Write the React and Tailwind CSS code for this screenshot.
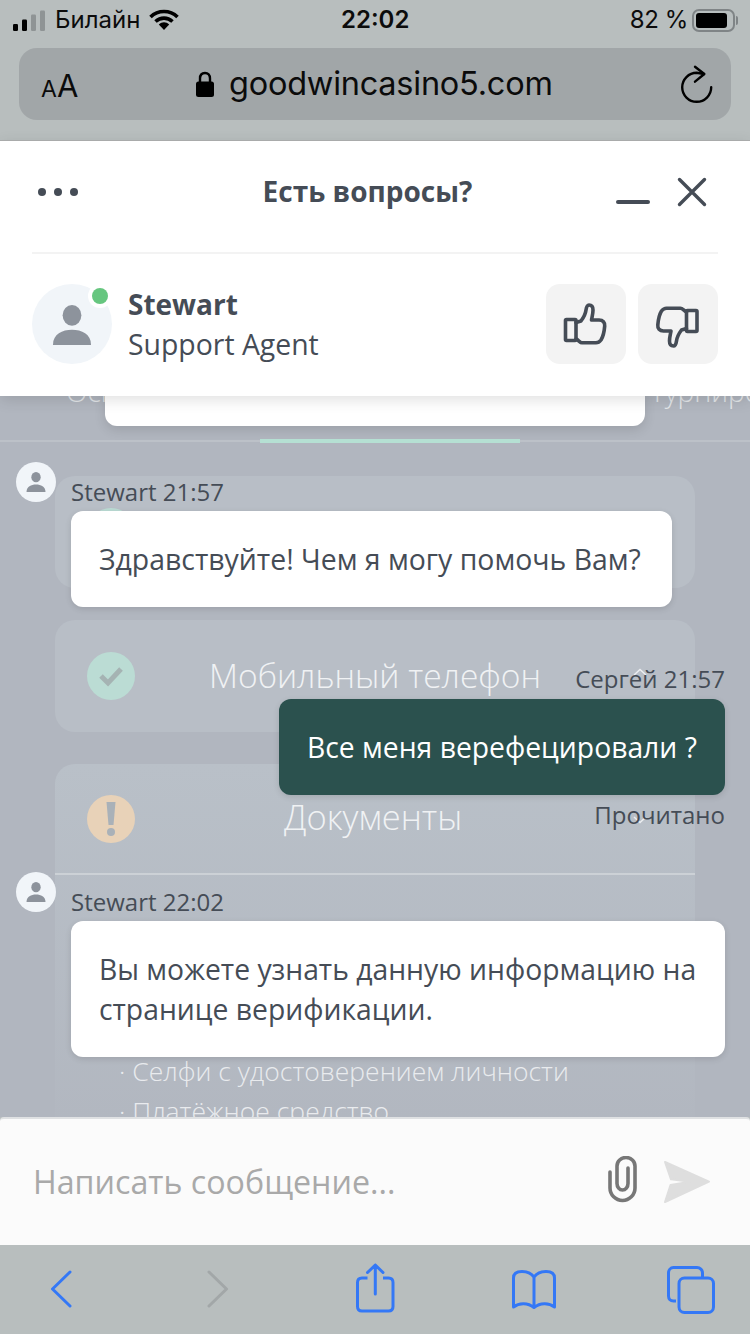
import React from "react";

const noto = "font-['Open_Sans','Noto_Sans',sans-serif]";
const inter = "font-['Inter','Liberation_Sans',sans-serif]";

function Person({ className, fill = "#8d939c" }) {
  return (
    <svg viewBox="6 5 28 29" className={className}>
      <ellipse cx="20" cy="12.5" rx="6.8" ry="7.5" fill={fill} />
      <path d="M6.2 34 C6.2 26 13 23 20 23 C27 23 33.8 26 33.8 34 Z" fill={fill} />
    </svg>
  );
}

function ThumbUp({ className, flip }) {
  return (
    <svg viewBox="0 0 80 80" className={className}>
      <g
        transform={flip ? "translate(78.5 83) rotate(180)" : undefined}
        fill="none"
        stroke="#454c56"
        strokeWidth="3.6"
        strokeLinejoin="round"
        strokeLinecap="round"
      >
        <rect x="19.5" y="35.5" width="10.5" height="21" rx="1" />
        <path d="M30 38.5 L35 37 C38 33 39.5 30 40 26 C40.5 22.5 41.5 21 43 21 C45.5 21 47 23 47 26 C47 30 46 33 45.5 36 L53 36 C57 36 59 38.5 58.7 42 C58.3 47 57.5 52 55 56 C53.5 58 52 58.8 50 58.8 L36 58.8 C34 58.8 32.5 56 30 55" />
      </g>
    </svg>
  );
}

function Avatar({ className }) {
  return (
    <div className={`absolute left-[-55px] w-10 h-10 rounded-full bg-[#f1f5f9] flex items-center justify-center ${className}`}>
      <Person className="w-5 h-5" />
    </div>
  );
}

function StatusBar() {
  return (
    <div className={`h-[40px] relative flex items-center justify-between pl-[13px] pr-[13px] ${inter} text-[#0c0c0c]`}>
      <div className="flex items-center">
        <svg width="33" height="21" viewBox="0 0 33 21">
          <rect x="0" y="14" width="5" height="7" rx="1.2" fill="#000" />
          <rect x="9" y="9.5" width="5" height="11.5" rx="1.2" fill="#000" />
          <rect x="18" y="4.5" width="5" height="16.5" rx="1.2" fill="#8f9495" />
          <rect x="27" y="0.5" width="5" height="20.5" rx="1.2" fill="#8f9495" />
        </svg>
        <span className="ml-[9px] text-[24px] leading-[30px]">Билайн</span>
        <svg width="30" height="22" viewBox="0 0 30 22" className="ml-[9px]">
          <g fill="none" stroke="#000" strokeWidth="3.6">
            <path d="M1.5 8 C9 0.7 21 0.7 28.5 8" />
            <path d="M6.5 12.5 C11.5 8 18.5 8 23.5 12.5" />
          </g>
          <path d="M9.8 15.6 C13 12.6 17 12.6 20.2 15.6 L15 21 Z" fill="#000" />
        </svg>
      </div>
      <span className="absolute left-[341px] text-[24px] leading-[30px] font-semibold">22:02</span>
      <div className="flex items-center">
        <span className="text-[24px] leading-[30px] mr-[4px] tracking-[-0.4px]">82 %</span>
        <div className="w-[43px] h-[23px] rounded-[7px] border-2 border-[#7f8486] p-[2px]">
          <div className="w-[31px] h-full rounded-[3px] bg-black" />
        </div>
        <div className="w-[2px] h-[9px] bg-[#7f8486] ml-[1px] mr-[-1px] rounded-r" />
      </div>
    </div>
  );
}

function UrlBar() {
  return (
    <div className={`mx-[19px] mt-[8px] h-[72px] rounded-[18px] bg-[#a1a6a8] relative flex items-center ${inter} text-[#0b0b0b]`}>
      <div className="ml-[22px] w-[38px] flex items-baseline pt-[2px]">
        <span className="text-[23px] leading-none">A</span>
        <span className="text-[31px] leading-none">A</span>
      </div>
      <svg width="18" height="26" viewBox="0 0 18 26" className="ml-[117px]">
        <path d="M4 12 V7.5 C4 4 6 2 9 2 C12 2 14 4 14 7.5 V12" fill="none" stroke="#000" strokeWidth="2.4" />
        <rect x="0" y="10.5" width="18" height="15.5" rx="2.5" fill="#000" />
      </svg>
      <span className="ml-[15px] text-[32.5px] leading-[40px] tracking-[-0.25px]">goodwincasino5.com</span>
      <svg width="34" height="38" viewBox="0 0 34 38" className="absolute right-[18px] top-[17px]">
        <path d="M25 9 L17.7 7.8 A14.5 14.5 0 1 0 32.2 22.3" fill="none" stroke="#000" strokeWidth="2.4" strokeLinecap="round" />
        <path d="M16 1.7 L25.3 9 L16 16.7" fill="none" stroke="#000" strokeWidth="2.4" strokeLinecap="round" strokeLinejoin="round" />
      </svg>
    </div>
  );
}

function ChatHeader() {
  return (
    <div className={`h-[256px] bg-white border-t border-[#a9abab] px-[32px] relative z-10 shadow-[0_4px_14px_rgba(0,0,0,0.12)] ${noto} text-[#454c56]`}>
      <div className="h-[113px] border-b-2 border-[#f3f3f3] relative flex items-center justify-center">
        <div className="absolute left-[6px] top-[47px] flex gap-[8px]">
          <div className="w-[8px] h-[8px] rounded-full bg-[#454c56]" />
          <div className="w-[8px] h-[8px] rounded-full bg-[#454c56]" />
          <div className="w-[8px] h-[8px] rounded-full bg-[#454c56]" />
        </div>
        <span className="text-[28px] leading-[36px] font-bold -mt-[12px] -ml-[15px]">Есть вопросы?</span>
        <div className="absolute left-[584px] top-[59px] w-[34px] h-[4px] rounded-full bg-[#454c56]" />
        <svg width="30" height="30" viewBox="0 0 30 30" className="absolute left-[645px] top-[36px]">
          <path d="M2.5 2.5 L27.5 27.5 M27.5 2.5 L2.5 27.5" stroke="#454c56" strokeWidth="3.4" strokeLinecap="round" />
        </svg>
      </div>
      <div className="pt-[30px] flex items-center">
        <div className="w-20 h-20 rounded-full bg-[#f1f5f9] relative flex items-center justify-center">
          <Person className="w-10 h-10 mt-[1px]" />
          <div className="absolute left-[56px] top-[0px] w-6 h-6 rounded-full bg-white flex items-center justify-center">
            <div className="w-4 h-4 rounded-full bg-[#66c67f]" />
          </div>
        </div>
        <div className="ml-4 flex-1 -mt-[1px]">
          <div className="text-[28px] leading-[40px] font-bold">Stewart</div>
          <div className="text-[28.4px] leading-[40px]">Support Agent</div>
        </div>
        <div className="w-20 h-20 rounded-[14px] bg-[#f3f3f3]">
          <ThumbUp className="w-20 h-20" />
        </div>
        <div className="w-20 h-20 rounded-[14px] bg-[#f3f3f3] ml-3">
          <ThumbUp className="w-20 h-20" flip />
        </div>
      </div>
    </div>
  );
}

function PageBehind() {
  return (
    <div className={`absolute inset-0 overflow-hidden ${noto} font-light text-[#f0f2f4]`}>
      <div className="h-[46px] border-b-2 border-[#bcc1c8] relative">
        <span className="absolute left-[66px] top-[-25px] text-[28px] leading-[40px] text-[#e3e6e9]">Основное</span>
        <span className="absolute left-[650px] top-[-25px] text-[28px] leading-[40px] whitespace-nowrap text-[#e3e6e9]">Турниро</span>
        <div className="absolute left-[105px] top-[-6px] w-[540px] h-[36px] rounded-b-[12px] bg-white shadow-[0_4px_12px_rgba(0,0,0,0.12)]" />
        <div className="absolute left-[260px] top-[43px] w-[260px] h-[4px] bg-[#b5e0d3]" />
      </div>
      <div className="mx-[55px] mt-[34px] flex flex-col gap-[32px]">
        <div className="h-[112px] rounded-[20px] bg-[#b8bec6] pl-[32px] pt-[32px]">
          <div className="w-12 h-12 rounded-full bg-[#bbdcd4]" />
        </div>
        <div className="h-[112px] rounded-[20px] bg-[#b8bec6] pl-[32px] flex items-center relative">
          <div className="w-12 h-12 rounded-full bg-[#bbdcd4] flex items-center justify-center">
            <svg width="26" height="22" viewBox="0 0 26 22">
              <path d="M3 11 L10 18 L23 4" fill="none" stroke="#a5b3b3" strokeWidth="5" />
            </svg>
          </div>
          <span className="ml-[74px] text-[33.6px] leading-[44px] whitespace-nowrap -mt-[2px]">Мобильный телефон</span>
          <svg width="14" height="8" viewBox="0 0 14 8" className="absolute left-[578px] top-[48px]">
            <path d="M1 7 L7 1.5 L13 7" fill="none" stroke="#eceef1" strokeWidth="1.5" />
          </svg>
        </div>
        <div className="h-[400px] rounded-t-[20px] bg-gradient-to-b from-[#b9c0c8] to-[#b1b6bf] relative">
          <div className="h-[111px] border-b-2 border-[#ccd1d6] pl-[32px] pt-[31px] flex items-start">
            <div className="w-12 h-12 rounded-full bg-[#e8d2b8] flex items-center justify-center">
              <svg width="12" height="36" viewBox="0 0 12 36">
                <path d="M1.5 1 H10.5 L8.5 24 H3.5 Z" fill="#a9b1b8" />
                <circle cx="6" cy="31" r="4" fill="#a9b1b8" />
              </svg>
            </div>
            <span className="ml-[149px] text-[34.5px] leading-[44px]">Документы</span>
            <svg width="14" height="8" viewBox="0 0 14 8" className="absolute left-[578px] top-[52px]">
              <path d="M1 1 L7 6.5 L13 1" fill="none" stroke="#eceef1" strokeWidth="1.5" />
            </svg>
          </div>
          <div className="pl-[64px] pt-[176px] text-[26.5px] leading-[40px] text-[#e9ebee]">
            <div>· Селфи с удостоверением личности</div>
            <div>· Платёжное средство</div>
          </div>
        </div>
      </div>
    </div>
  );
}

function Messages() {
  return (
    <div className={`relative pl-[71px] pr-[25px] pt-[81px] ${noto} text-[#454c56]`}>
      <div className="relative">
        <Avatar className="top-[-15px]" />
        <div className="text-[24px] leading-[30px] h-[34px]">Stewart 21:57</div>
        <div className="w-[601px] h-[96px] rounded-[12px] bg-white shadow-[0_2px_6px_rgba(0,0,0,0.12)] px-[28px] flex items-center text-[28.4px] leading-[40px] whitespace-nowrap">
          Здравствуйте! Чем я могу помочь Вам?
        </div>
      </div>
      <div className="mt-[57px] flex flex-col items-end">
        <div className="text-[24px] leading-[30px] h-[35px]">Сергей 21:57</div>
        <div className="w-[446px] h-[96px] rounded-[12px] bg-[#2b514e] shadow-[0_2px_6px_rgba(0,0,0,0.12)] px-[28px] flex items-center text-[28.3px] leading-[40px] text-white whitespace-nowrap">
          Все меня верефецировали ?
        </div>
        <div className="mt-[5px] text-[24px] leading-[30px]">Прочитано</div>
      </div>
      <div className="relative mt-[57px]">
        <Avatar className="top-[-15px]" />
        <div className="text-[24px] leading-[30px] h-[34px]">Stewart 22:02</div>
        <div className="h-[136px] rounded-[12px] bg-white shadow-[0_2px_6px_rgba(0,0,0,0.12)] px-[28px] flex items-center text-[28.3px] leading-[40px] whitespace-nowrap">
          <div>Вы можете узнать данную информацию на<br />странице верификации.</div>
        </div>
      </div>
    </div>
  );
}

function InputBar() {
  return (
    <div className={`h-[128px] bg-[#fbfbfb] border-t-2 border-[#dfe1e3] rounded-t-[4px] relative z-10 flex items-center pl-[33px] ${noto}`}>
      <span className="text-[32.2px] leading-[40px] text-[#a9a9a9]">Написать сообщение...</span>
      <svg width="32" height="48" viewBox="0 0 32 48" className="absolute left-[607px] top-[37px]">
        <path d="M3 16 V32 A12.5 12.5 0 0 0 28 32 V10 A9 8.5 0 0 0 10 10 V27.5 A5.5 6.5 0 0 0 21 27.5 V12" fill="none" stroke="#777" strokeWidth="3.6" strokeLinecap="round" strokeLinejoin="round" />
      </svg>
      <svg width="48" height="44" viewBox="0 0 48 44" className="absolute left-[663px] top-[41px]">
        <path d="M2 2 L46 21.7 L2 42 L7.5 25 L27 21.7 L8 19.3 Z" fill="#dedede" strokeLinejoin="round" stroke="#dedede" strokeWidth="2" />
      </svg>
    </div>
  );
}

function Toolbar() {
  const blue = "#3478f6";
  return (
    <div className="flex-1 bg-[#b8bebe] relative flex items-center pl-[50px] pb-[1px]">
      <svg width="22" height="38" viewBox="0 0 22 38">
        <path d="M20 2 L2.5 19 L20 36" fill="none" stroke={blue} strokeWidth="3" strokeLinecap="round" strokeLinejoin="round" />
      </svg>
      <svg width="22" height="38" viewBox="0 0 22 38" className="ml-[135px]">
        <path d="M2 2 L19.5 19 L2 36" fill="none" stroke="#a2a7a8" strokeWidth="3" strokeLinecap="round" strokeLinejoin="round" />
      </svg>
      <svg width="40" height="50" viewBox="0 0 40 50" className="-mt-[2px] ml-[127px]">
        <path d="M11.5 15 H6 C3 15 1.5 16.5 1.5 19.5 V43.5 C1.5 46.5 3 48 6 48 H32.5 C35.5 48 37 46.5 37 43.5 V19.5 C37 16.5 35.5 15 32.5 15 H27" fill="none" stroke={blue} strokeWidth="3" />
        <path d="M19.3 31 V2 M11.5 9.5 L19.3 2 L27 9.5" fill="none" stroke={blue} strokeWidth="3" strokeLinecap="round" strokeLinejoin="round" />
      </svg>
      <svg width="46" height="42" viewBox="0 0 46 42" className="ml-[115px] mt-[1px]">
        <path d="M23 8 C20 4 15 2.5 11 2.5 C5 2.5 2.5 5 2.5 9 V38 C8 33.5 17 33.5 23 38.5 C29 33.5 38 33.5 43.5 38 V9 C43.5 5 41 2.5 35 2.5 C31 2.5 26 4 23 8 Z M23 8 V38" fill="none" stroke={blue} strokeWidth="3" strokeLinejoin="round" strokeLinecap="round" />
      </svg>
      <svg width="48" height="48" viewBox="0 0 48 48" className="ml-[110px] mt-[2px]">
        <path d="M9 35 H6.5 C3.5 35 1.5 33 1.5 30 V7 C1.5 4 3.5 1.5 6.5 1.5 H30 C33 1.5 35.5 4 35.5 7 V11" fill="none" stroke={blue} strokeWidth="3" />
        <rect x="12" y="12" width="34.5" height="34.5" rx="5.5" fill="none" stroke={blue} strokeWidth="3" />
      </svg>
    </div>
  );
}

export default function App() {
  return (
    <div className="w-[750px] h-[1334px] flex flex-col overflow-hidden bg-[#b8bebe]">
      <div className="h-[140px]">
        <StatusBar />
        <UrlBar />
      </div>
      <ChatHeader />
      <div className="h-[721px] relative bg-[#b1b6bf] overflow-hidden">
        <PageBehind />
        <Messages />
      </div>
      <InputBar />
      <Toolbar />
    </div>
  );
}
